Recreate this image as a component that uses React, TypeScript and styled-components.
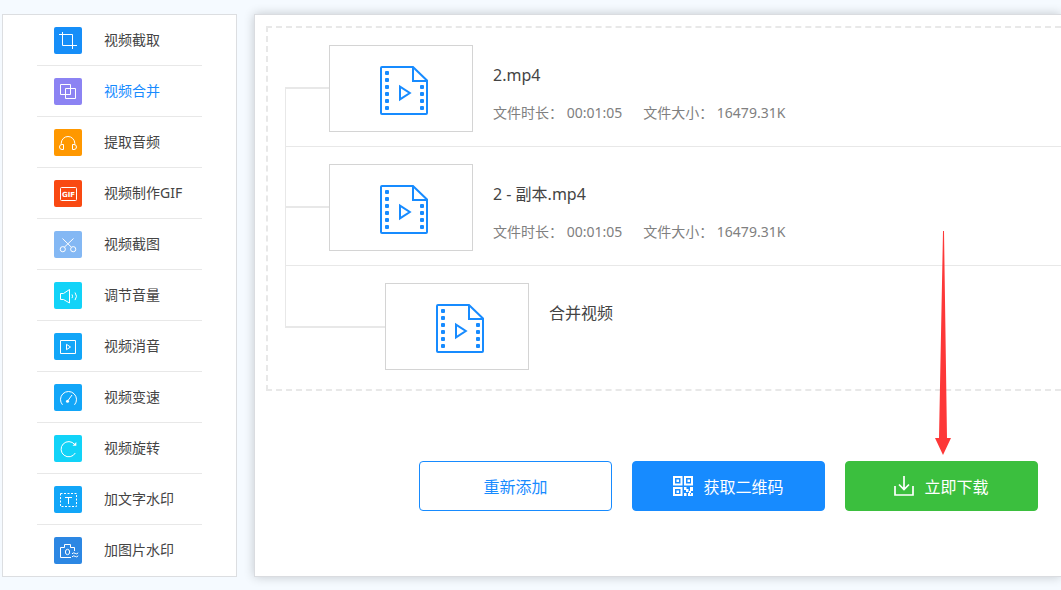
import React from "react";
import styled, { createGlobalStyle } from "styled-components";

const LINE = "#e8e8e8";
const BLUE = "#178bff";

const GlobalStyle = createGlobalStyle`
  *, *::before, *::after { box-sizing: border-box; }
  body {
    margin: 0;
    background: #f5faff;
    color: #444;
    font-family: "Noto Sans", "Noto Sans CJK SC", sans-serif;
    font-size: 14px;
  }
`;

const Page = styled.div`
  display: flex;
  gap: 17px;
  min-height: 100vh;
  padding: 14px 0 13px 2px;
  overflow: hidden;
`;

const Sidebar = styled.nav`
  flex: none;
  width: 235px;
  padding: 0 34px;
  background: #fff;
  border: 1px solid #dcdee1;
`;

const ToolList = styled.ul`
  margin: 0;
  padding: 0;
  list-style: none;
`;

const ToolItem = styled.li`
  height: 51px;
  border-bottom: 1px solid ${LINE};
  &:last-child { border-bottom-color: transparent; }
`;

const ToolLink = styled.a<{ $active?: boolean }>`
  display: flex;
  align-items: center;
  gap: 22px;
  height: 100%;
  padding-left: 17px;
  line-height: 20px;
  white-space: nowrap;
  text-decoration: none;
  color: ${(p) => (p.$active ? BLUE : "#444")};
`;

const ToolIcon = styled.svg<{ $color: string }>`
  flex: none;
  width: 28px;
  height: 27px;
  border-radius: 2px;
  background: ${(p) => p.$color};
  fill: none;
  stroke: #fff;
  stroke-width: 1;
`;

const IconText = styled.text`
  fill: #fff;
  stroke: none;
  font-family: "DejaVu Sans", sans-serif;
  font-weight: bold;
  text-anchor: middle;
`;

const Main = styled.main`
  position: relative;
  flex: 1;
  min-width: 0;
  padding: 11px 0 65px 11px;
  background: #fff;
  border: 1px solid #dadce0;
  border-right: 0;
  box-shadow: 0 0 10px rgba(0, 0, 0, 0.2);
`;

const DropZone = styled.section`
  padding-left: 17px;
  border: 2px dashed ${LINE};
  border-right: 0;
`;

const FileRow = styled.article<{ $result?: boolean }>`
  display: flex;
  height: ${(p) => (p.$result ? 123 : 119)}px;
  border-bottom: ${(p) => (p.$result ? "0" : `1px solid ${LINE}`)};
`;

const Branch = styled.div<{ $wide?: boolean }>`
  display: flex;
  flex-direction: column;
  flex: none;
  width: ${(p) => (p.$wide ? 100 : 44)}px;
`;

const StemAbove = styled.div<{ $visible: boolean }>`
  height: 59px;
  border-left: 1px solid ${(p) => (p.$visible ? LINE : "transparent")};
`;

const StemBelow = styled.div`
  flex: 1;
  border-left: 1px solid ${LINE};
  border-top: 2px solid ${LINE};
`;

const StemEnd = styled.div`
  height: 62px;
  border-left: 1px solid ${LINE};
  border-bottom: 2px solid ${LINE};
`;

const Thumb = styled.div`
  display: flex;
  align-items: center;
  justify-content: center;
  flex: none;
  width: 144px;
  height: 87px;
  margin-top: 17px;
  border: 1px solid #d4d4d4;
`;

const Details = styled.div`
  padding: 35px 0 0 20px;
  white-space: nowrap;
`;

const FileName = styled.h2`
  margin: 0;
  font-size: 16px;
  font-weight: 400;
  line-height: 24px;
  color: #444;
`;

const Meta = styled.p`
  display: flex;
  gap: 21px;
  margin: 16px 0 0;
  line-height: 20px;
  color: #808080;
`;

const Actions = styled.div`
  display: flex;
  justify-content: flex-end;
  gap: 20px;
  margin-top: 70px;
  padding-right: 23px;
`;

const Button = styled.button<{ $tone: "outline" | "blue" | "green" }>`
  display: flex;
  align-items: center;
  justify-content: center;
  gap: 10px;
  width: 193px;
  height: 50px;
  padding: 0;
  border: 1px solid ${(p) => (p.$tone === "green" ? "#3bbf3e" : BLUE)};
  border-radius: 4px;
  background: ${(p) => ({ outline: "#fff", blue: BLUE, green: "#3bbf3e" })[p.$tone]};
  color: ${(p) => (p.$tone === "outline" ? BLUE : "#fff")};
  font: inherit;
  font-size: 16px;
  cursor: pointer;
`;

const Pointer = styled.svg`
  position: absolute;
  top: 216px;
  right: 110px;
  width: 16px;
  height: 224px;
  fill: #fd3838;
  pointer-events: none;
`;

const tools: { label: string; color: string; active?: boolean; art: React.ReactNode }[] = [
  {
    label: "视频截取",
    color: "#168ef8",
    art: <path d="M5 7.5H18.5V22M8.5 5V18.5H23" />,
  },
  {
    label: "视频合并",
    color: "#8c83f3",
    active: true,
    art: <path d="M6.5 6.5h10v10h-10zM11.5 10.5h10v10h-10z" />,
  },
  {
    label: "提取音频",
    color: "#ff9800",
    art: (
      <path d="M7.2 15.5V14.5a6.8 7 0 0 1 13.6 0V15.5M9.5 15.5v5H8a2.5 2.5 0 0 1 0-5zM18.5 15.5v5H20a2.5 2.5 0 0 0 0-5z" />
    ),
  },
  {
    label: "视频制作GIF",
    color: "#f94912",
    art: (
      <>
        <rect x="6.5" y="7.5" width="16" height="13" rx="1" />
        <IconText x="14.5" y="17" fontSize="7">GIF</IconText>
      </>
    ),
  },
  {
    label: "视频截图",
    color: "#84b8f4",
    art: (
      <>
        <path d="M8.5 7.5L17.4 16.2M19.5 7.5L10.3 16.2" />
        <circle cx="8.8" cy="18.2" r="2.6" />
        <circle cx="19.2" cy="18.2" r="2.6" />
      </>
    ),
  },
  {
    label: "调节音量",
    color: "#12d3f8",
    art: <path d="M6.5 11.5v6H9.5L15.5 21V7.5L9.5 11.5zM18 12.5q1.2 1.8 0 3.6M21 10.5q3 3.8 0 7.6" />,
  },
  {
    label: "视频消音",
    color: "#12a6f8",
    art: <path d="M6.5 7.5h15v13h-15zM12.5 11.3v5.4L16.5 14z" />,
  },
  {
    label: "视频变速",
    color: "#12a6f8",
    art: (
      <>
        <path d="M8.5 20.8A8 8 0 1 1 20.5 20.8M14 16.5L18 11" />
        <circle cx="13.5" cy="17.3" r="1.5" fill="#fff" stroke="none" />
      </>
    ),
  },
  {
    label: "视频旋转",
    color: "#12d3f8",
    art: (
      <>
        <path d="M20.6 9.4A7.6 7.6 0 1 0 21.3 18" />
        <path d="M22.3 7v3.8h-3.8z" fill="#fff" stroke="none" />
      </>
    ),
  },
  {
    label: "加文字水印",
    color: "#12a6f8",
    art: (
      <>
        <rect x="6.5" y="7.5" width="16" height="13" strokeDasharray="2 1.5" />
        <path d="M11 11.5h7M14.5 11.5V18" />
      </>
    ),
  },
  {
    label: "加图片水印",
    color: "#2c87e3",
    art: (
      <>
        <path d="M17 20.5H6.5V10.5H10.5V7.5H16.5V10.5H20.5V14" />
        <ellipse cx="13.5" cy="15" rx="2.1" ry="2.7" />
        <path d="M18 16.8q1.6-1.7 3.2-.4t3-.6M18 19.8q1.6-1.7 3.2-.4t3-.6" />
      </>
    ),
  },
];

const FilmIcon = () => (
  <svg width="54" height="53" viewBox="-6 -4 54 53" fill="none" stroke={BLUE} strokeWidth="2" aria-hidden="true">
    <path d="M2 1H33L47 14.5V47Q47 48 46 48H2Q1 48 1 47V2Q1 1 2 1zM33 1V15H47" />
    <path d="M20 20.6V33.4L29.8 27z" />
    <g fill={BLUE} stroke="none">
      {[5, 12, 19, 26, 33, 40].map((y) => (
        <rect key={y} x="5" y={y} width="4" height="4" rx="1" />
      ))}
      {[19, 26, 33, 40].map((y) => (
        <rect key={y} x="40" y={y} width="4" height="4" rx="1" />
      ))}
    </g>
  </svg>
);

const QrIcon = () => (
  <svg width="20" height="20" viewBox="0 0 20 20" fill="none" stroke="#fff" strokeWidth="2" aria-hidden="true">
    <path d="M1 1h7.5v7.5H1zM12 1h7v7.5h-7zM1 12h7.5v7H1z" />
    <path
      fill="#fff"
      stroke="none"
      d="M3.5 3.5h2.5v2.5h-2.5zM14.5 3.5h2.5v2.5h-2.5zM3.5 14.5h2.5v2.5h-2.5zM11 11h2.5v2h2v3h-2.5v-2h-2zM17 11h3v4h-2v2h-2v-2h1zM11 17h2.5v3H11zM15 17h2v1.5h1V17h2v3h-5z"
    />
  </svg>
);

const DownloadIcon = () => (
  <svg width="20" height="20" viewBox="0 0 20 20" fill="none" stroke="#fff" strokeWidth="1.7" aria-hidden="true">
    <path d="M1 10V19H19V10M10 0V13M5 8.5L10 13.5L15 8.5" />
  </svg>
);

const files = [
  { name: "2.mp4", duration: "00:01:05", size: "16479.31K" },
  { name: "2 - 副本.mp4", duration: "00:01:05", size: "16479.31K" },
];

export default function App() {
  return (
    <>
      <GlobalStyle />
      <Page>
        <Sidebar>
          <ToolList>
            {tools.map((tool) => (
              <ToolItem key={tool.label}>
                <ToolLink href="#" $active={tool.active}>
                  <ToolIcon viewBox="0 0 28 27" $color={tool.color} aria-hidden="true">
                    {tool.art}
                  </ToolIcon>
                  {tool.label}
                </ToolLink>
              </ToolItem>
            ))}
          </ToolList>
        </Sidebar>
        <Main>
          <DropZone>
            {files.map((file, index) => (
              <FileRow key={file.name}>
                <Branch>
                  <StemAbove $visible={index > 0} />
                  <StemBelow />
                </Branch>
                <Thumb>
                  <FilmIcon />
                </Thumb>
                <Details>
                  <FileName>{file.name}</FileName>
                  <Meta>
                    <span>文件时长： {file.duration}</span>
                    <span>文件大小： {file.size}</span>
                  </Meta>
                </Details>
              </FileRow>
            ))}
            <FileRow $result>
              <Branch $wide>
                <StemEnd />
              </Branch>
              <Thumb>
                <FilmIcon />
              </Thumb>
              <Details>
                <FileName>合并视频</FileName>
              </Details>
            </FileRow>
          </DropZone>
          <Actions>
            <Button type="button" $tone="outline">重新添加</Button>
            <Button type="button" $tone="blue">
              <QrIcon />
              获取二维码
            </Button>
            <Button type="button" $tone="green">
              <DownloadIcon />
              立即下载
            </Button>
          </Actions>
          <Pointer viewBox="0 0 16 224" aria-hidden="true">
            <path d="M8 0H9L12 207H16L8 224L0 207H4z" />
          </Pointer>
        </Main>
      </Page>
    </>
  );
}
